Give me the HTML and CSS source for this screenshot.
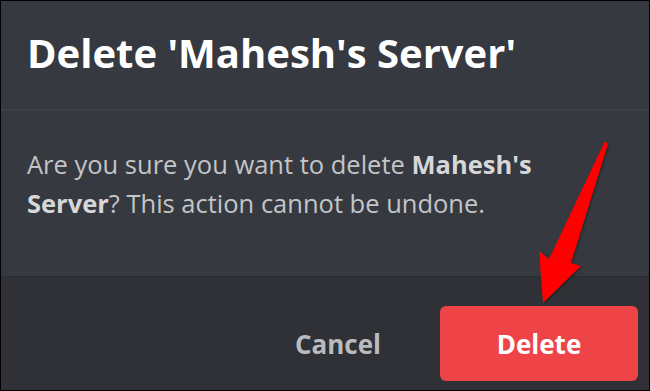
FILE: index.html
```html
<!DOCTYPE html>
<html lang="en">
<head>
<meta charset="utf-8">
<title>Delete Server</title>
<link rel="stylesheet" href="styles.css">
</head>
<body>
<div class="modal">
  <header class="modal-header">
    <h1 class="modal-title">Delete 'Mahesh's Server'</h1>
  </header>
  <div class="modal-body">
    <p class="modal-text">Are you sure you want to delete <strong>Mahesh's</strong> <strong>Server</strong>? This action cannot be undone.</p>
  </div>
  <footer class="modal-footer">
    <button class="btn btn-cancel" type="button">Cancel</button>
    <button class="btn btn-delete" type="button">Delete</button>
  </footer>
  <svg class="pointer-arrow" width="650" height="391" viewBox="0 0 650 391" aria-hidden="true">
    <polygon points="605,141 608,144 571,263 581,266 543,303 539,251 549,259" fill="#ff0000"/>
  </svg>
</div>
</body>
</html>
```
FILE: styles.css
```css
html, body {
  margin: 0;
  padding: 0;
  background: #000;
}
body {
  width: 650px;
  height: 391px;
  overflow: hidden;
  font-family: "Open Sans", "Liberation Sans", sans-serif;
}
.modal {
  margin: 1px;
  width: 648px;
  height: 389px;
  display: flex;
  flex-direction: column;
  background: #36393f;
}
.modal-header {
  height: 109px;
  box-sizing: border-box;
  padding: 28px 0 0 26px;
  border-bottom: 1px solid #41444a;
}
.modal-title {
  margin: 0;
  font-size: 40px;
  line-height: 48px;
  font-weight: 700;
  color: #ffffff;
}
.modal-body {
  height: 166px;
  box-sizing: border-box;
  padding: 35px 0 0 26px;
}
.modal-text {
  margin: 0;
  width: 560px;
  font-size: 25.5px;
  line-height: 39px;
  color: #c3c5c8;
}
.modal-text strong {
  font-weight: 700;
  color: #d6d7d9;
}
.modal-footer {
  flex: 1;
  border-top: 1px solid #2a2c31;
  background: #2f3136;
  display: flex;
  justify-content: flex-end;
  align-items: flex-start;
  padding: 29px 11px 0 0;
}
.btn {
  border: 0;
  font-family: "Open Sans", "Liberation Sans", sans-serif;
  font-size: 26px;
  font-weight: 700;
  height: 75px;
  cursor: pointer;
}
.btn-cancel {
  background: transparent;
  color: #b9bbbe;
  padding: 0 30px;
  margin-right: 29px;
}
.btn-delete {
  width: 198px;
  background: #ee4448;
  color: #ffffff;
  border-radius: 6px;
}
.pointer-arrow {
  position: absolute;
  left: 0;
  top: 0;
  pointer-events: none;
  filter: drop-shadow(1px 1px 1px rgba(0,0,0,0.35));
}
```
